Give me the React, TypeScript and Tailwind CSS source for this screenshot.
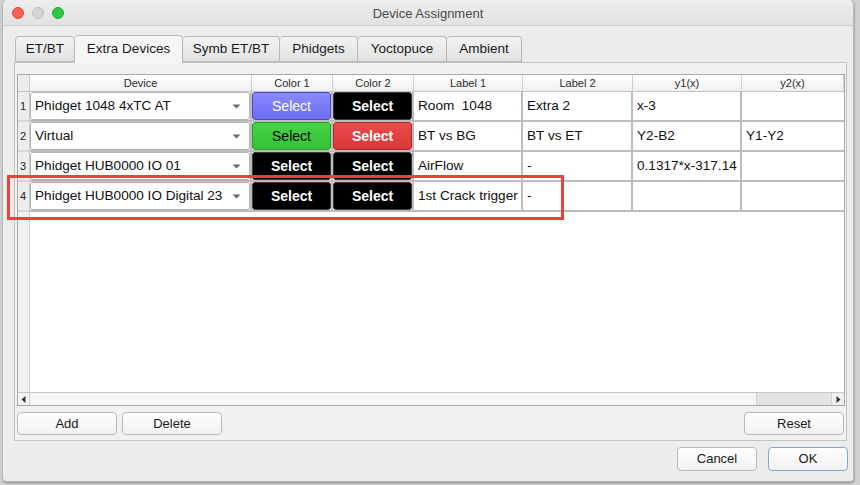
import React from "react";

const F = { fontFamily: '"Liberation Sans", Arial, sans-serif' };

type Row = {
  n: number;
  device: string;
  c1: { bg: string; fg: string; bold?: boolean };
  c2: { bg: string; fg: string; bold?: boolean };
  l1: string;
  l2: string;
  y1: string;
  y2: string;
};

const BLACK = { bg: "black", fg: "white", bold: true };

const rows: Row[] = [
  { n: 1, device: "Phidget 1048 4xTC AT", c1: { bg: "blue", fg: "white" }, c2: BLACK, l1: "Room  1048", l2: "Extra 2", y1: "x-3", y2: "" },
  { n: 2, device: "Virtual", c1: { bg: "green", fg: "black" }, c2: { bg: "red", fg: "white", bold: true }, l1: "BT vs BG", l2: "BT vs ET", y1: "Y2-B2", y2: "Y1-Y2" },
  { n: 3, device: "Phidget HUB0000 IO 01", c1: BLACK, c2: BLACK, l1: "AirFlow", l2: "-", y1: "0.1317*x-317.14", y2: "" },
  { n: 4, device: "Phidget HUB0000 IO Digital 23", c1: BLACK, c2: BLACK, l1: "1st Crack trigger", l2: "-", y1: "", y2: "" },
];

function ColorBtn({ c }: { c: { bg: string; fg: string; bold?: boolean } }) {
  const bg =
    c.bg === "blue"
      ? "bg-gradient-to-b from-[#8a8aff] to-[#6d6df2] border-[#4b4bc8]"
      : c.bg === "green"
      ? "bg-gradient-to-b from-[#46d446] to-[#34c234] border-[#2a9a2a]"
      : c.bg === "red"
      ? "bg-gradient-to-b from-[#ea4a4a] to-[#dc3838] border-[#a82a2a]"
      : "bg-black border-[#3a3a3a]";
  return (
    <div
      className={`h-full w-full rounded-[3px] border flex items-center justify-center text-[14px] ${bg} ${
        c.fg === "white" ? "text-white" : "text-black"
      } ${c.bold ? "font-semibold" : ""}`}
    >
      Select
    </div>
  );
}

function Btn({ label, w, def }: { label: string; w: string; def?: boolean }) {
  return (
    <div
      className={`${w} flex items-center justify-center rounded-[4px] border bg-gradient-to-b from-white to-[#f1f1f1] text-[13px] text-[#1a1a1a] ${
        def ? "border-[#7ea6dc]" : "border-[#b9b9b9]"
      }`}
    >
      {label}
    </div>
  );
}

const tabs = [
  { t: "ET/BT", w: "w-[60px]" },
  { t: "Extra Devices", w: "w-[108px]", sel: true },
  { t: "Symb ET/BT", w: "w-[97px]" },
  { t: "Phidgets", w: "w-[78px]" },
  { t: "Yoctopuce", w: "w-[89px]" },
  { t: "Ambient", w: "w-[75px]" },
];

const cellB = "border-r-2 border-[#bdbdbd] shrink-0";

export default function App() {
  return (
    <div className="relative w-[860px] h-[485px] bg-[#d2d2d2] overflow-hidden" style={F}>
      <div className="ml-[3px] w-[851px] h-[482px] bg-[#ececec] rounded-t-[5px] rounded-b-[4px] border-r border-b border-[#b4b4b4] flex flex-col shadow-[0_1px_3px_rgba(0,0,0,0.35)]">
        {/* title bar */}
        <div className="h-[26px] shrink-0 grid grid-cols-[1fr_auto_1fr] items-center bg-gradient-to-b from-[#ededed] to-[#e2e2e2] border-b border-[#cdcdcd] rounded-t-[5px]">
          <div className="flex items-center gap-[8px] pl-[9px] pt-[1px]">
            <div className="w-[12px] h-[12px] rounded-full bg-[#fc5f57] border border-[#e0443e]" />
            <div className="w-[12px] h-[12px] rounded-full bg-[#d3d3d3] border border-[#c0c0c0]" />
            <div className="w-[12px] h-[12px] rounded-full bg-[#2fc840] border border-[#24a831]" />
          </div>
          <div className="text-[13px] text-[#4a4a4a] pt-[3px]">Device Assignment</div>
          <div />
        </div>

        {/* body */}
        <div className="pl-[11px] pt-[9px] flex flex-col">
          {/* tabs */}
          <div className="flex items-end h-[27px] pl-[1px]">
            {tabs.map((t, i) => (
              <div
                key={t.t}
                className={`${t.w} shrink-0 flex items-center justify-center text-[13.5px] text-[#1a1a1a] border-t border-r border-[#b7b7b7] rounded-t-[4px] ${
                  i === 0 ? "border-l" : ""
                } ${
                  t.sel
                    ? "h-[28px] bg-[#f5f5f5] relative z-10 -mb-px pb-[1px]"
                    : "h-[26px] bg-gradient-to-b from-[#f2f2f2] to-[#e2e2e2] border-b border-b-[#b7b7b7]"
                }`}
              >
                {t.t}
              </div>
            ))}
          </div>

          {/* pane */}
          <div className="w-[833px] h-[379px] border border-[#c2c2c2] bg-[#f1f1f1] flex flex-col pt-[11px] pl-[2px] pr-[1px]">
            {/* table */}
            <div className="w-[828px] h-[332px] border border-[#a9a9a9] bg-white flex flex-col overflow-hidden">
              {/* header */}
              <div className="h-[17px] shrink-0 flex border-b border-[#c4c4c4] bg-gradient-to-b from-white to-[#efefef] text-[11px] text-[#2b2b2b]">
                <div className="w-[12px] shrink-0 border-r border-[#c8c8c8] bg-[#ececec]" />
                {[
                  ["Device", "w-[222px]"],
                  ["Color 1", "w-[81px]"],
                  ["Color 2", "w-[81px]"],
                  ["Label 1", "w-[109px]"],
                  ["Label 2", "w-[110px]"],
                  ["y1(x)", "w-[109px]"],
                  ["y2(x)", "flex-1"],
                ].map(([h, w]) => (
                  <div key={h} className={`${w} shrink-0 border-r border-[#cfcfcf] flex items-center justify-center`}>
                    {h}
                  </div>
                ))}
              </div>

              {/* rows */}
              {rows.map((r) => (
                <div key={r.n} className="h-[30px] shrink-0 flex text-[13.6px] text-[#111]">
                  <div className="w-[12px] shrink-0 border-r border-[#c8c8c8] bg-[#ededed] border-b-2 border-b-[#d6d6d6] text-[11px] flex items-center pl-[2px] text-[#222]">
                    {r.n}
                  </div>
                  <div className="flex flex-1 border-b-2 border-[#bdbdbd]">
                    <div className={`w-[222px] ${cellB} p-0`}>
                      <div className="h-full bg-white border border-[#b5b5b5] rounded-[3px] flex items-center justify-between pl-[4px] pr-[8px] shadow-[0_1px_0_rgba(0,0,0,0.05)]">
                        <span className="whitespace-nowrap">{r.device}</span>
                        <svg width="9" height="5" viewBox="0 0 9 5">
                          <path d="M0.5 0.5 L8.5 0.5 L4.5 4.5 Z" fill="#6a6a6a" />
                        </svg>
                      </div>
                    </div>
                    <div className={`w-[81px] ${cellB}`}>
                      <ColorBtn c={r.c1} />
                    </div>
                    <div className={`w-[81px] ${cellB}`}>
                      <ColorBtn c={r.c2} />
                    </div>
                    <div className={`w-[109px] ${cellB} flex items-center pl-[4px] whitespace-pre`}>{r.l1}</div>
                    <div className={`w-[110px] ${cellB} flex items-center pl-[4px] whitespace-pre`}>{r.l2}</div>
                    <div className={`w-[109px] ${cellB} flex items-center pl-[4px] whitespace-nowrap`}>{r.y1}</div>
                    <div className="flex-1 flex items-center pl-[4px]">{r.y2}</div>
                  </div>
                </div>
              ))}

              {/* empty area */}
              <div className="flex-1 flex">
                <div className="w-[12px] shrink-0 border-r border-[#cfcfcf] bg-[#f0f0f0]" />
                <div className="flex-1 bg-white" />
              </div>

              {/* horizontal scrollbar */}
              <div className="h-[13px] shrink-0 flex border-t border-[#c6c6c6] bg-[#ebebeb]">
                <div className="w-[12px] shrink-0 flex items-center justify-center border-r border-[#d0d0d0] bg-[#f2f2f2]">
                  <svg width="5" height="7" viewBox="0 0 5 7">
                    <path d="M4.5 0 L4.5 7 L0.5 3.5 Z" fill="#333" />
                  </svg>
                </div>
                <div className="w-[727px] shrink-0 bg-[#f6f6f6] border-r border-[#d2d2d2]" />
                <div className="flex-1 bg-[#e3e3e3]" />
                <div className="w-[13px] shrink-0 flex items-center justify-center border-l border-[#d0d0d0] bg-[#efefef]">
                  <svg width="5" height="7" viewBox="0 0 5 7">
                    <path d="M0.5 0 L0.5 7 L4.5 3.5 Z" fill="#333" />
                  </svg>
                </div>
              </div>
            </div>

            {/* pane buttons */}
            <div className="mt-[6px] h-[23px] flex gap-[5px] pr-[1px]">
              <Btn label="Add" w="w-[100px]" />
              <Btn label="Delete" w="w-[100px]" />
              <div className="flex-1" />
              <Btn label="Reset" w="w-[100px]" />
            </div>
          </div>

          {/* dialog buttons */}
          <div className="mt-[6px] h-[24px] flex justify-end gap-[11px] pr-[5px]">
            <Btn label="Cancel" w="w-[80px]" />
            <Btn label="OK" w="w-[80px]" def />
          </div>
        </div>
      </div>

      {/* red highlight annotation */}
      <div className="absolute left-[7px] top-[175px] w-[557px] h-[45px] border-[3px] border-[#e8423b]" />
    </div>
  );
}
